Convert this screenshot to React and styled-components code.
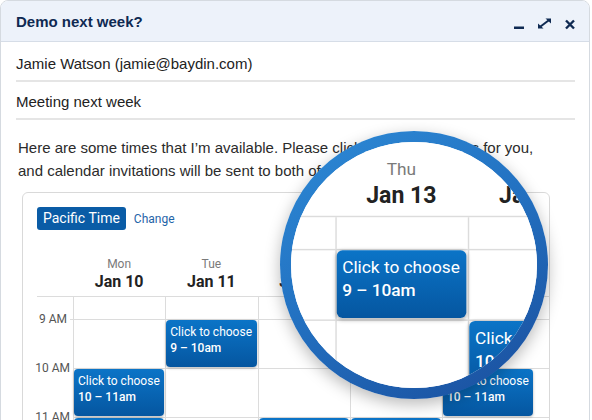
import React from "react";
import styled, { createGlobalStyle } from "styled-components";

const GlobalStyle = createGlobalStyle`
  html, body {
    margin: 0;
    padding: 0;
    background: #fff;
    overflow: hidden;
  }
  body {
    font-family: "Liberation Sans", Arial, sans-serif;
  }
`;

const Stage = styled.div`
  position: relative;
  width: 592px;
  height: 420px;
  overflow: hidden;
`;

const Window = styled.div`
  width: 590px;
  height: 540px;
  box-sizing: border-box;
  border: 1px solid #d5dae0;
  border-radius: 8px 8px 0 0;
  overflow: hidden;
  background: #fff;
`;

const Header = styled.div`
  height: 40px;
  border-bottom: 1px solid #d6dde7;
  background: #edf2fa;
  display: flex;
  align-items: center;
  justify-content: space-between;
  padding: 0 14px 0 15px;
`;

const Title = styled.div`
  font-size: 15px;
  font-weight: 700;
  color: #0f2a52;
`;

const Controls = styled.div`
  display: flex;
  align-items: center;
  gap: 14px;
  padding-top: 4px;
  color: #0f2a52;

  svg {
    display: block;
  }
`;

const Fields = styled.div`
  padding: 2px 14px 0 15px;
`;

const Field = styled.div`
  padding: 11px 0 7px;
  line-height: 18px;
  font-size: 15px;
  color: #222;
  border-bottom: 2px solid #e5e5e5;
`;

const Message = styled.p`
  margin: 16px 0 0 17px;
  width: 530px;
  font-size: 15px;
  line-height: 23px;
  color: #2b2b2b;
`;

const Card = styled.div`
  width: 528px;
  box-sizing: border-box;
  border: 1px solid #d9d9d9;
  border-radius: 6px;
  padding: 14px 0 0 14px;
  background: #fff;
  font-family: Roboto, "Liberation Sans", sans-serif;
`;

const Toolbar = styled.div`
  display: flex;
  align-items: center;
  gap: 8px;
`;

const ZoneBadge = styled.div`
  height: 23px;
  line-height: 23px;
  padding: 0 6px;
  border-radius: 3px;
  background: #0a5ca6;
  color: #fff;
  font-size: 14px;
`;

const ChangeLink = styled.a`
  font-size: 12px;
  color: #1f64a8;
  text-decoration: none;
`;

const Columns = styled.div`
  display: grid;
  grid-template-columns: 36px repeat(5, 92.25px) 1fr;
`;

const DayHead = styled.div`
  padding: 26px 0 4px;
  text-align: center;
`;

const DayName = styled.div`
  font-size: 12px;
  line-height: 16px;
  color: #7a7a7a;
`;

const DayDate = styled.div`
  font-size: 16px;
  line-height: 20px;
  font-weight: 700;
  color: #222;
`;

const GridBody = styled.div`
  border-top: 1px solid #dcdcdc;
`;

const Row = styled(Columns)`
  height: ${(p) => (p.$lead ? "22px" : "49px")};
`;

const TimeCell = styled.div`
  display: flex;
  justify-content: flex-end;
  align-items: flex-start;
`;

const TimeLabel = styled.span`
  margin: -8px 3px 0 0;
  font-size: 12px;
  line-height: 16px;
  color: #555;
  white-space: nowrap;
`;

const Tick = styled.span`
  width: 3px;
  border-top: 1px solid #dcdcdc;
`;

const DayCell = styled.div`
  box-sizing: border-box;
  border-left: ${(p) => (p.$filler ? "none" : "1px solid #dcdcdc")};
  border-top: ${(p) => (p.$lead ? "none" : "1px solid #dcdcdc")};
`;

const Slot = styled.div`
  height: 47px;
  margin-right: 1px;
  box-sizing: border-box;
  padding: 4px 4px 0;
  border-radius: 4px;
  background: linear-gradient(#0b74c7, #0556a0);
  box-shadow: 0 1px 3px rgba(0, 0, 0, 0.3);
  color: #fff;
  font-size: 12px;
  line-height: 16px;
  white-space: nowrap;
  overflow: hidden;
  position: relative;
`;

const SlotTime = styled.div`
  font-weight: 500;
`;

const Lens = styled.div`
  position: absolute;
  left: 280px;
  top: 131px;
  width: 268px;
  height: 268px;
  box-sizing: border-box;
  padding: 11px;
  border-radius: 50%;
  background: linear-gradient(150deg, #2d8ad6 0%, #2372c2 45%, #1a4d9c 100%);
  box-shadow: 0 5px 16px rgba(0, 0, 0, 0.28);
`;

const LensView = styled.div`
  position: relative;
  width: 100%;
  height: 100%;
  border-radius: 50%;
  overflow: hidden;
  background: #fff;
`;

const Magnified = styled.div`
  position: absolute;
  left: -428.3px;
  top: -76.5px;
  transform: scale(1.44);
  transform-origin: 0 0;
`;

const days = [
  ["Mon", "Jan 10"],
  ["Tue", "Jan 11"],
  ["Wed", "Jan 12"],
  ["Thu", "Jan 13"],
  ["Fri", "Jan 14"],
];

const hours = [
  { label: "9 AM", range: "9 – 10am", open: [false, true, false, true, false] },
  { label: "10 AM", range: "10 – 11am", open: [true, false, false, false, true] },
  { label: "11 AM", range: "11am – 12pm", open: [true, false, true, true, false] },
  { label: "12 PM", range: "12 – 1pm", open: [false, false, false, false, false] },
];

const MinimizeIcon = () => (
  <svg width="10" height="14" viewBox="0 0 10 14">
    <rect x="0" y="10.5" width="10" height="2.5" fill="currentColor" />
  </svg>
);

const ExpandIcon = () => (
  <svg width="13" height="14" viewBox="0 0 13 14">
    <line x1="2.5" y1="10.5" x2="10.5" y2="4.5" stroke="currentColor" strokeWidth="2" />
    <polygon points="13,2.5 7.5,2.5 13,7.5" fill="currentColor" />
    <polygon points="0,12.5 5.5,12.5 0,7.5" fill="currentColor" />
  </svg>
);

const CloseIcon = () => (
  <svg width="10" height="14" viewBox="0 0 10 14">
    <path d="M1 4.5 L9 12.5 M9 4.5 L1 12.5" stroke="currentColor" strokeWidth="2.4" />
  </svg>
);

const CalendarCard = ({ className }) => (
  <Card className={className}>
    <Toolbar>
      <ZoneBadge>Pacific Time</ZoneBadge>
      <ChangeLink href="#">Change</ChangeLink>
    </Toolbar>
    <Columns>
      <div />
      {days.map(([name, date]) => (
        <DayHead key={date}>
          <DayName>{name}</DayName>
          <DayDate>{date}</DayDate>
        </DayHead>
      ))}
      <div />
    </Columns>
    <GridBody>
      <Row $lead>
        <TimeCell />
        {days.map(([, date]) => (
          <DayCell key={date} $lead />
        ))}
        <DayCell $lead $filler />
      </Row>
      {hours.map((h) => (
        <Row key={h.label}>
          <TimeCell>
            <TimeLabel>{h.label}</TimeLabel>
            <Tick />
          </TimeCell>
          {h.open.map((open, i) => (
            <DayCell key={i}>
              {open && (
                <Slot>
                  <div>Click to choose</div>
                  <SlotTime>{h.range}</SlotTime>
                </Slot>
              )}
            </DayCell>
          ))}
          <DayCell $filler />
        </Row>
      ))}
    </GridBody>
  </Card>
);

const PlacedCalendar = styled(CalendarCard)`
  margin: 10px 0 0 21px;
`;

const App = () => (
  <>
    <GlobalStyle />
    <Stage>
      <Window>
        <Header>
          <Title>Demo next week?</Title>
          <Controls>
            <MinimizeIcon />
            <ExpandIcon />
            <CloseIcon />
          </Controls>
        </Header>
        <Fields>
          <Field>Jamie Watson (jamie@baydin.com)</Field>
          <Field>Meeting next week</Field>
        </Fields>
        <Message>
          Here are some times that I’m available. Please click a time that works for you,
          and calendar invitations will be sent to both of us.
        </Message>
        <PlacedCalendar />
      </Window>
      <Lens>
        <LensView>
          <Magnified>
            <CalendarCard />
          </Magnified>
        </LensView>
      </Lens>
    </Stage>
  </>
);

export default App;
